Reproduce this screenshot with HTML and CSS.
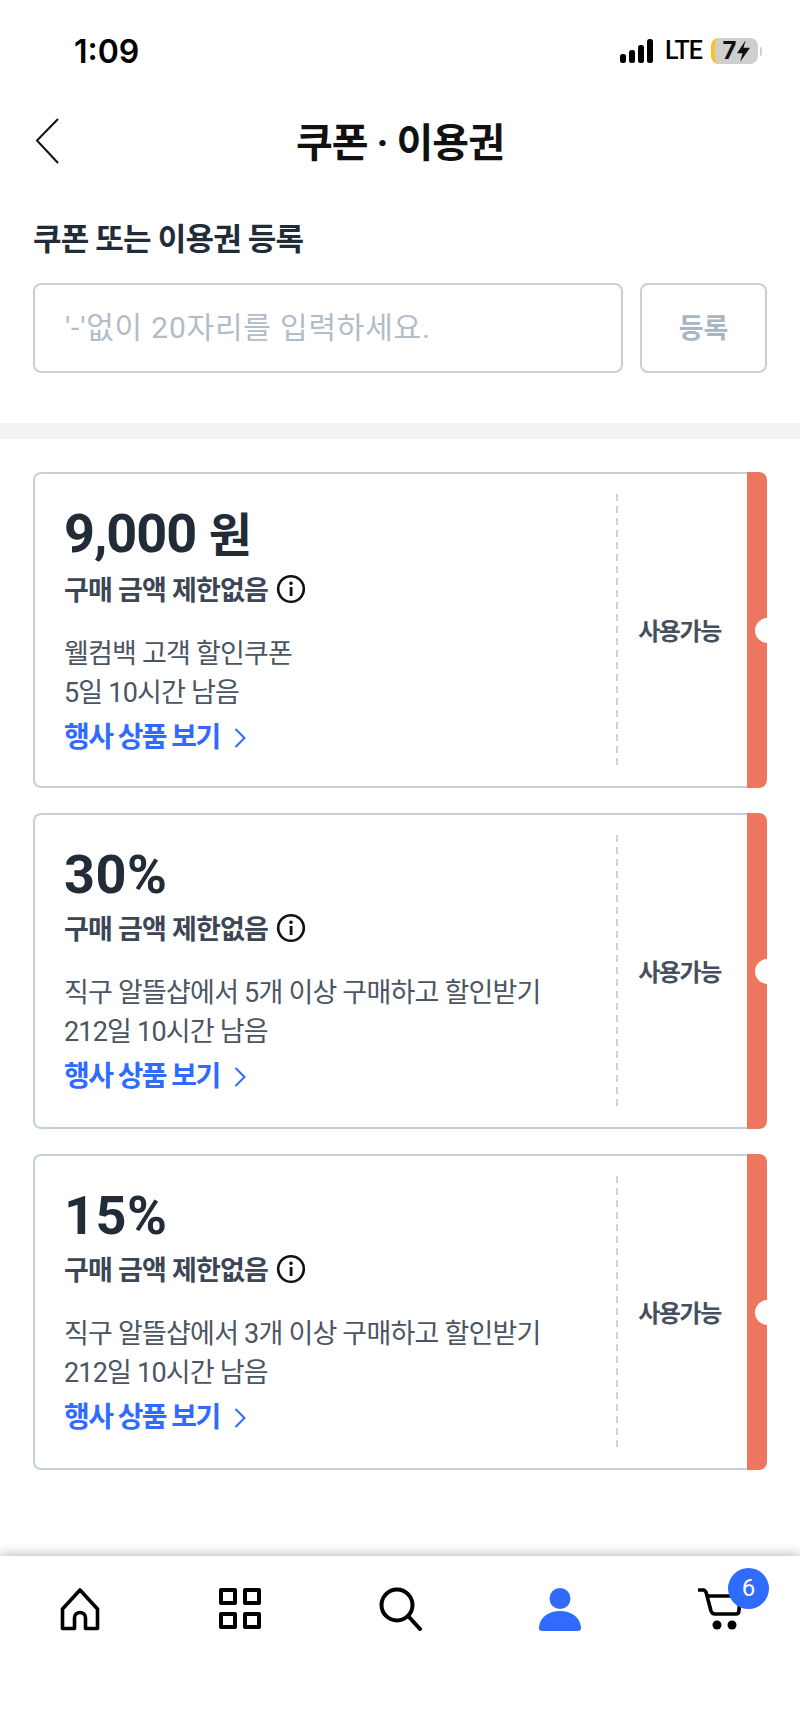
FILE: index.html
```html
<!DOCTYPE html>
<html lang="ko">
<head>
  <meta charset="UTF-8" />
  <meta name="viewport" content="width=device-width, initial-scale=1" />
  <title>쿠폰 · 이용권</title>
  <link rel="stylesheet" href="styles.css">
</head>
<body>
  <div class="screen">
    <div class="status-bar">
      <span class="time">1:09</span>
      <div class="status-right">
        <svg class="signal" width="34" height="24" viewBox="0 0 34 24"><rect x="0" y="15" width="6" height="9" rx="2.5"/><rect x="9" y="11" width="6" height="13" rx="2.5"/><rect x="18" y="6" width="6" height="18" rx="2.5"/><rect x="27" y="0" width="6" height="24" rx="2.5"/></svg>
        <span class="lte">LTE</span>
        <div class="battery"><span class="battery-num">7</span><svg width="13" height="22" viewBox="0 0 12 20"><path d="M8 0 L0 12 H5 L3 20 L12 7 H6 Z" fill="#111"/></svg></div>
        <span class="battery-nub"></span>
      </div>
    </div>

    <div class="top-bar">
      <svg class="back" width="24" height="46" viewBox="0 0 24 46"><path d="M23 1 L2 22.5 L23 45" fill="none" stroke="#111" stroke-width="2"/></svg>
      <h1>쿠폰 · 이용권</h1>
    </div>

    <div class="register">
      <div class="register-label">쿠폰 또는 이용권 등록</div>
      <div class="register-row">
        <input class="code-input" type="text" placeholder="'-'없이 20자리를 입력하세요.">
        <button class="register-btn">등록</button>
      </div>
    </div>

    <div class="band"></div>

    <div class="coupon-list">
      <div class="coupon">
        <div class="coupon-body">
          <div class="coupon-main">
            <div class="amount">9,000 <span class="unit">원</span></div>
            <div class="limit">구매 금액 제한없음
              <svg width="30" height="30" viewBox="0 0 30 30"><circle cx="15" cy="15" r="12.8" fill="none" stroke="#111" stroke-width="2.6"/><rect x="13.7" y="13" width="2.8" height="9" fill="#111"/><circle cx="15" cy="9.3" r="1.8" fill="#111"/></svg>
            </div>
            <div class="desc">웰컴백 고객 할인쿠폰<br>5일 10시간 남음</div>
            <a class="event-link">행사 상품 보기
              <svg width="12" height="20" viewBox="0 0 12 20"><path d="M1.5 1 L10.5 10 L1.5 19" fill="none" stroke="#2f6bff" stroke-width="2"/></svg>
            </a>
          </div>
          <div class="coupon-state">사용가능</div>
        </div>
        <div class="strip"></div>
      </div>

      <div class="coupon">
        <div class="coupon-body">
          <div class="coupon-main">
            <div class="amount percent">30%</div>
            <div class="limit">구매 금액 제한없음
              <svg width="30" height="30" viewBox="0 0 30 30"><circle cx="15" cy="15" r="12.8" fill="none" stroke="#111" stroke-width="2.6"/><rect x="13.7" y="13" width="2.8" height="9" fill="#111"/><circle cx="15" cy="9.3" r="1.8" fill="#111"/></svg>
            </div>
            <div class="desc">직구 알뜰샵에서 5개 이상 구매하고 할인받기<br>212일 10시간 남음</div>
            <a class="event-link">행사 상품 보기
              <svg width="12" height="20" viewBox="0 0 12 20"><path d="M1.5 1 L10.5 10 L1.5 19" fill="none" stroke="#2f6bff" stroke-width="2"/></svg>
            </a>
          </div>
          <div class="coupon-state">사용가능</div>
        </div>
        <div class="strip"></div>
      </div>

      <div class="coupon">
        <div class="coupon-body">
          <div class="coupon-main">
            <div class="amount percent">15%</div>
            <div class="limit">구매 금액 제한없음
              <svg width="30" height="30" viewBox="0 0 30 30"><circle cx="15" cy="15" r="12.8" fill="none" stroke="#111" stroke-width="2.6"/><rect x="13.7" y="13" width="2.8" height="9" fill="#111"/><circle cx="15" cy="9.3" r="1.8" fill="#111"/></svg>
            </div>
            <div class="desc">직구 알뜰샵에서 3개 이상 구매하고 할인받기<br>212일 10시간 남음</div>
            <a class="event-link">행사 상품 보기
              <svg width="12" height="20" viewBox="0 0 12 20"><path d="M1.5 1 L10.5 10 L1.5 19" fill="none" stroke="#2f6bff" stroke-width="2"/></svg>
            </a>
          </div>
          <div class="coupon-state">사용가능</div>
        </div>
        <div class="strip"></div>
      </div>
    </div>

    <nav class="tab-bar">
      <div class="tab">
        <svg width="44" height="44" viewBox="0 0 44 44"><path d="M22 3 L39.5 22 V41.5 H27.5 V31 a5.5 5.5 0 0 0 -11 0 V41.5 H4.5 V22 Z" fill="none" stroke="#000" stroke-width="3.6" stroke-linejoin="round"/></svg>
      </div>
      <div class="tab">
        <svg width="44" height="44" viewBox="0 0 44 44"><g fill="none" stroke="#000" stroke-width="4" stroke-linejoin="round"><rect x="3" y="3" width="14" height="13"/><rect x="27" y="3" width="14" height="13"/><rect x="3" y="27" width="14" height="13"/><rect x="27" y="27" width="14" height="13"/></g></svg>
      </div>
      <div class="tab">
        <svg width="44" height="44" viewBox="0 0 44 44"><circle cx="19" cy="18" r="15.5" fill="none" stroke="#000" stroke-width="4"/><path d="M31 30 L42 42" stroke="#000" stroke-width="4" stroke-linecap="round"/></svg>
      </div>
      <div class="tab">
        <svg width="44" height="44" viewBox="0 0 44 44"><circle cx="22" cy="11.5" r="10.5" fill="#2f6bff"/><path d="M4 44 a3 3 0 0 1 -3 -4 C2 30 11 24 22 24 S42 30 43 40 a3 3 0 0 1 -3 4 Z" fill="#2f6bff"/></svg>
      </div>
      <div class="tab">
        <svg width="44" height="44" viewBox="0 0 44 44"><path d="M1 3 H6 L8 5 L13 24 Q14 27 17 27 H38 Q41 27 41 23 L42 9 H9" fill="none" stroke="#000" stroke-width="3.6" stroke-linecap="round" stroke-linejoin="round"/><circle cx="19" cy="38" r="4.5"/><circle cx="34" cy="38" r="4.5"/></svg>
        <span class="cart-badge">6</span>
      </div>
    </nav>
  </div>
</body>
</html>
```

FILE: styles.css
```css
* {
  box-sizing: border-box;
}

body {
  margin: 0;
  padding: 0;
  background: #fff;
  font-family: Roboto, 'Noto Sans CJK KR', sans-serif;
  color: #222b38;
}

.screen {
  width: 800px;
  height: 1732px;
  display: flex;
  flex-direction: column;
  overflow: hidden;
}

/* status bar */
.status-bar {
  height: 100px;
  padding: 38px 38px 0 74px;
  display: flex;
  justify-content: space-between;
  align-items: flex-start;
}

.time {
  font-family: Inter, sans-serif;
  font-size: 32px;
  line-height: 28px;
  font-weight: 600;
  color: #000;
}

.status-right {
  display: flex;
  align-items: center;
  height: 26px;
}

.signal {
  fill: #000;
  margin-right: 11px;
}

.lte {
  width: 38px;
  font-size: 25px;
  line-height: 26px;
  font-weight: 500;
  letter-spacing: -1px;
  white-space: nowrap;
  color: #000;
  margin-right: 8px;
}

.battery {
  width: 47px;
  height: 26px;
  border-radius: 8px;
  border-left: 4px solid #f7c325;
  background: #cfcfcf;
  display: flex;
  align-items: center;
  justify-content: center;
  gap: 1px;
}

.battery-num {
  font-family: Inter, sans-serif;
  font-size: 24px;
  line-height: 24px;
  font-weight: 700;
  color: #111;
}

.battery-nub {
  width: 2px;
  height: 9px;
  margin-left: 2px;
  border-radius: 0 2px 2px 0;
  background: #cfcfcf;
}

/* title */
.top-bar {
  height: 80px;
  display: flex;
  align-items: center;
  justify-content: center;
  position: relative;
}

.back {
  position: absolute;
  left: 35px;
  top: 18px;
}

.top-bar h1 {
  margin: 0;
  font-size: 40px;
  font-weight: 700;
  letter-spacing: -1px;
  color: #111;
}

/* register form */
.register {
  padding: 42px 33px 50px;
}

.register-label {
  font-size: 31px;
  line-height: 36px;
  font-weight: 700;
  letter-spacing: -0.8px;
  color: #222b38;
  margin-bottom: 25px;
}

.register-row {
  display: flex;
  gap: 17px;
}

.code-input {
  flex: 1;
  min-width: 0;
  height: 90px;
  padding: 0 30px 2px;
  border: 2px solid #c5d0db;
  border-radius: 8px;
  background: #fff;
  font-family: inherit;
  font-size: 30px;
  letter-spacing: 0.8px;
}

.code-input::placeholder {
  color: #b1bcc9;
  opacity: 1;
}

.register-btn {
  width: 127px;
  height: 90px;
  padding: 0 0 4px;
  border: 2px solid #c5d0db;
  border-radius: 8px;
  background: #fff;
  font-family: inherit;
  font-size: 27px;
  font-weight: 600;
  color: #a9b5c2;
}

.band {
  height: 16px;
  background: #f1f3f5;
}

/* coupons */
.coupon-list {
  padding: 33px 33px 0;
  display: flex;
  flex-direction: column;
  gap: 25px;
}

.coupon {
  height: 316px;
  display: flex;
}

.coupon-body {
  flex: 1;
  display: flex;
  border: 2px solid #c5d0db;
  border-right: 0;
  border-radius: 8px 0 0 8px;
}

.coupon-main {
  flex: 1;
  padding: 30px 0 0 29px;
}

.amount {
  font-size: 54px;
  line-height: 60px;
  font-weight: 700;
  letter-spacing: -1px;
  color: #222b38;
}

.amount.percent {
  letter-spacing: 0.5px;
}

.unit {
  font-size: 47px;
}

.limit {
  margin-top: 7px;
  display: flex;
  align-items: center;
  gap: 8px;
  font-size: 27px;
  line-height: 36px;
  font-weight: 600;
  letter-spacing: -0.8px;
  color: #3c4654;
}

.limit svg {
  margin-top: -4px;
}

.desc {
  margin-top: 26px;
  font-size: 27px;
  line-height: 39px;
  letter-spacing: -0.8px;
  color: #4b5563;
}

.event-link {
  margin-top: 5px;
  display: flex;
  align-items: center;
  gap: 14px;
  font-size: 28px;
  line-height: 40px;
  font-weight: 700;
  letter-spacing: -1.6px;
  color: #2f6bff;
}

.coupon-state {
  width: 131px;
  margin: 20px 0;
  padding: 0 4px 2px 0;
  display: flex;
  align-items: center;
  justify-content: center;
  font-size: 24px;
  font-weight: 700;
  letter-spacing: -1.4px;
  color: #454f5e;
  background: repeating-linear-gradient(to bottom, #c9d3dd 0 7px, transparent 7px 12px) left top / 2px 100% no-repeat;
}

.strip {
  position: relative;
  width: 20px;
  overflow: hidden;
  border-radius: 0 8px 8px 0;
  background: #ee765e;
}

.strip::after {
  content: "";
  position: absolute;
  left: 8px;
  top: 146px;
  width: 25px;
  height: 25px;
  border-radius: 50%;
  background: #fff;
}

/* bottom tabs */
.tab-bar {
  margin-top: auto;
  height: 176px;
  padding-top: 31px;
  display: grid;
  grid-template-columns: repeat(5, 1fr);
  background: #fff;
  box-shadow: 0 -2px 10px rgba(0, 0, 0, 0.25);
}

.tab {
  position: relative;
  display: flex;
  justify-content: center;
  align-items: flex-start;
}

.cart-badge {
  position: absolute;
  left: 88px;
  top: -19px;
  width: 41px;
  height: 41px;
  border-radius: 50%;
  background: #2f6bff;
  color: #fff;
  font-size: 24px;
  line-height: 41px;
  text-align: center;
}
```
